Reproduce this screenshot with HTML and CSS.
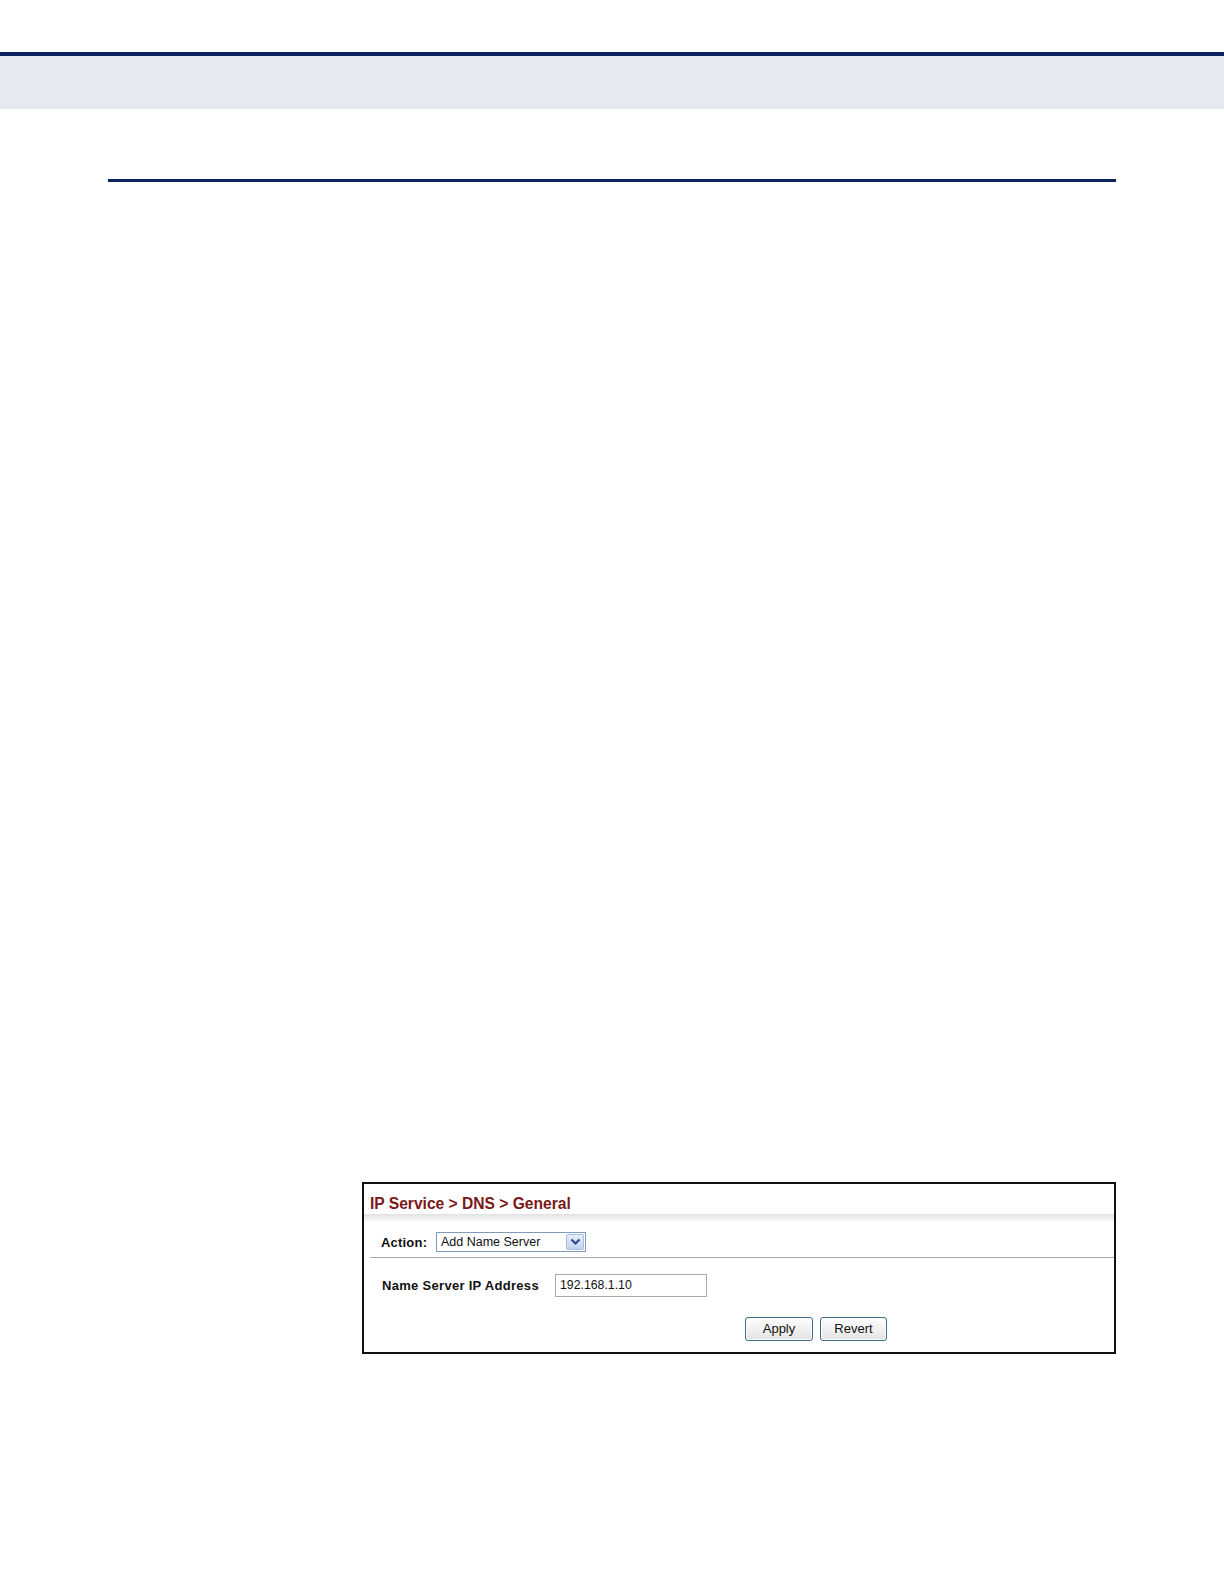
FILE: index.html
```html
<!DOCTYPE html>
<html>
<head>
<meta charset="utf-8">
<link rel="stylesheet" href="styles.css">
</head>
<body>
<div class="topgap"></div>
<div class="navbar"></div>
<div class="band"></div>
<div class="rule"></div>
<div class="panel">
  <div class="title">IP Service &gt; DNS &gt; General</div>
  <div class="shade"></div>
  <div class="action-row">
    <span class="label">Action:</span>
    <div class="select">
      <span class="select-text">Add Name Server</span>
      <span class="select-btn">
        <svg width="11" height="8" viewBox="0 0 11 8"><path d="M1.5 1.5 L5.5 5.5 L9.5 1.5" fill="none" stroke="#2a4a8a" stroke-width="2.2"/></svg>
      </span>
    </div>
  </div>
  <div class="sep"></div>
  <div class="field-row">
    <span class="label wide">Name Server IP Address</span>
    <div class="input">192.168.1.10</div>
  </div>
  <div class="buttons">
    <div class="btn apply">Apply</div>
    <div class="btn revert">Revert</div>
  </div>
</div>
</body>
</html>
```

FILE: styles.css
```css
html, body {
  margin: 0;
  padding: 0;
  background: #ffffff;
}
body {
  font-family: "Liberation Sans", Arial, sans-serif;
  width: 1224px;
  height: 1584px;
  overflow: hidden;
}
.topgap { height: 52px; }
.navbar { height: 4px; background: #0b2461; }
.band { height: 53px; background: #e6e9f0; }
.rule {
  margin: 70px 0 0 108px;
  width: 1008px;
  height: 3px;
  background: #0b2461;
}
.panel {
  margin: 1000px 0 0 362px;
  width: 754px;
  height: 172px;
  box-sizing: border-box;
  border: 2px solid #111;
  background: #fff;
  display: flex;
  flex-direction: column;
}
.title {
  height: 30px;
  box-sizing: border-box;
  padding: 10px 0 0 6px;
  line-height: 20px;
  font-size: 15.6px;
  font-weight: bold;
  color: #7a1818;
}
.shade {
  height: 8px;
  background: linear-gradient(#e2e2e2, #eeeeee 50%, #ffffff);
}
.action-row {
  display: flex;
  align-items: center;
  height: 35px;
  box-sizing: border-box;
  padding: 5px 0 0 17px;
}
.label {
  font-size: 13px;
  font-weight: bold;
  letter-spacing: 0.2px;
  color: #111;
  width: 55px;
}
.label.wide { width: 173px; letter-spacing: 0.3px; }
.select {
  width: 150px;
  height: 20px;
  box-sizing: border-box;
  border: 1px solid #7f9db9;
  display: flex;
  align-items: center;
  justify-content: space-between;
  background: #fff;
}
.select-text {
  font-size: 12.5px;
  color: #111;
  padding-left: 4px;
}
.select-btn {
  width: 18px;
  height: 16px;
  margin-right: 1px;
  box-sizing: border-box;
  border: 1px solid #a9bde0;
  border-radius: 2px;
  background: linear-gradient(#e6eefc, #c1d2f2);
  display: flex;
  align-items: center;
  justify-content: center;
}
.sep {
  height: 1px;
  margin-left: 6px;
  background: #a8a8a8;
}
.field-row {
  display: flex;
  align-items: center;
  height: 55px;
  padding-left: 18px;
}
.input {
  width: 152px;
  height: 23px;
  box-sizing: border-box;
  border: 1px solid #a6acb3;
  font-size: 12.3px;
  line-height: 21px;
  padding-left: 4px;
  color: #111;
}
.buttons {
  display: flex;
  gap: 7px;
  padding-left: 381px;
  margin-top: 4px;
}
.btn {
  height: 24px;
  box-sizing: border-box;
  border: 1px solid #3e6a8c;
  border-radius: 3px;
  background: linear-gradient(#fdfdfd, #eeeeee 60%, #e2e2e2);
  font-size: 13px;
  line-height: 22px;
  text-align: center;
  color: #111;
  box-shadow: inset 0 0 0 1px #ffffff;
}
.apply { width: 68px; }
.revert { width: 67px; }
```
